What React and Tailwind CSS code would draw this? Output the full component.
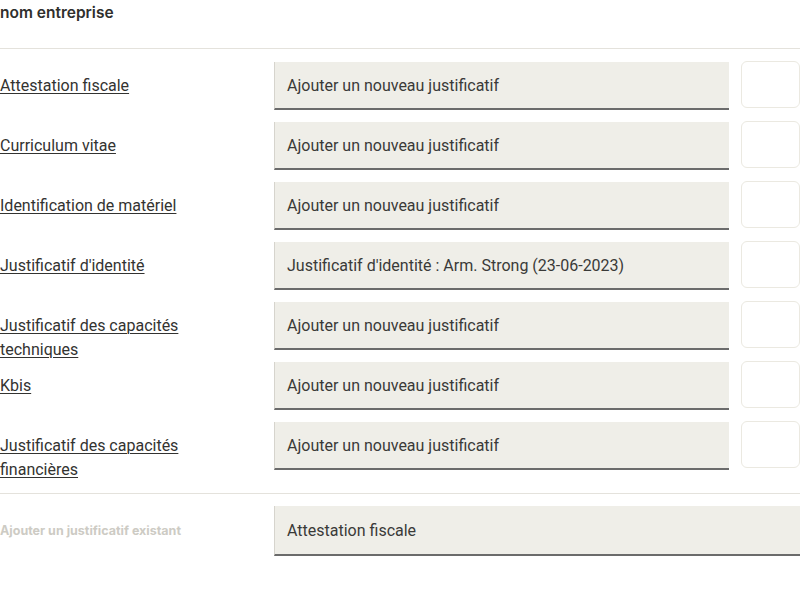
const rows = [
  { label: 'Attestation fiscale', value: 'Ajouter un nouveau justificatif' },
  { label: 'Curriculum vitae', value: 'Ajouter un nouveau justificatif' },
  { label: 'Identification de matériel', value: 'Ajouter un nouveau justificatif' },
  { label: "Justificatif d'identité", value: "Justificatif d'identité : Arm. Strong (23-06-2023)" },
  { label: 'Justificatif des capacités techniques', value: 'Ajouter un nouveau justificatif' },
  { label: 'Kbis', value: 'Ajouter un nouveau justificatif' },
  { label: 'Justificatif des capacités financières', value: 'Ajouter un nouveau justificatif' },
];

function Field({ children, className = '' }) {
  return (
    <div className={'flex items-center pl-3 pt-[2px] bg-[#efeee8] border-l border-l-[#d6d4cd] border-b-2 border-b-[#6b6b6b] text-[16px] text-[#3a3a38] whitespace-nowrap overflow-hidden ' + className}>
      {children}
    </div>
  );
}

export default function App() {
  return (
    <div className="w-[800px] bg-white font-['Roboto',sans-serif] text-[#333331]">
      <div className="h-[49px] border-b border-[#e4e2dc]">
        <h1 className="font-['Inter',sans-serif] font-semibold text-[15.5px] leading-[25px] text-[#2f2f2d]">nom entreprise</h1>
      </div>

      <div className="pt-[13px] flex flex-col gap-3">
        {rows.map((r, i) => (
          <div key={i} className="h-[48px] grid grid-cols-[262px_1fr_59px] gap-x-3 items-start">
            <div className="pt-3">
              <a href="#" className="block max-w-[220px] text-[16px] leading-[24px] underline underline-offset-2 decoration-1 text-[#333331]">{r.label}</a>
            </div>
            <Field className="h-[48px]">{r.value}</Field>
            <div className="h-[47px] -mt-px rounded-md border border-[#ebe9e1] bg-white"></div>
          </div>
        ))}
      </div>

      <div className="mt-[23px] border-t border-[#e4e2dc] pt-3 grid grid-cols-[262px_1fr] gap-x-3 items-center">
        <div className="font-['Inter',sans-serif] font-bold text-[12.5px] text-[#cdcbc4]">Ajouter un justificatif existant</div>
        <Field className="h-[50px]">Attestation fiscale</Field>
      </div>
    </div>
  );
}
